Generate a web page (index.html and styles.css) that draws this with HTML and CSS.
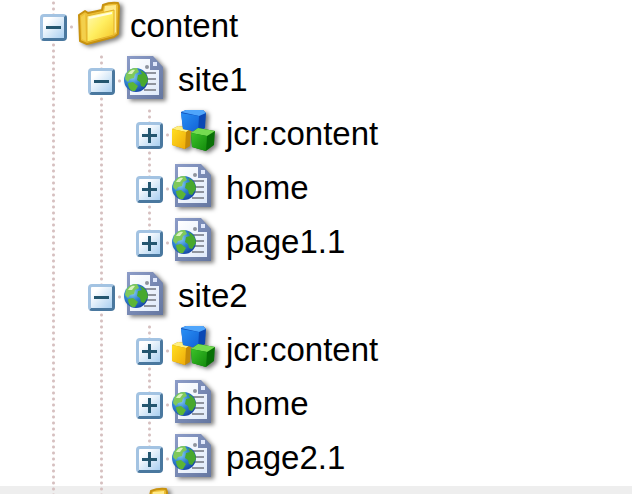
FILE: index.html
```html
<!DOCTYPE html>
<html lang="en">
<head>
  <meta charset="UTF-8">
  <title>Content tree</title>
  <link rel="stylesheet" href="styles.css">
</head>
<body>

  <!-- Icons used by the tree rows -->
  <svg class="sprite" aria-hidden="true">
    <defs>
      <linearGradient id="gold" x1="0" y1="0" x2="1" y2="1">
        <stop offset="0" stop-color="#fffbb8"/>
        <stop offset="0.5" stop-color="#ffee60"/>
        <stop offset="1" stop-color="#f5c426"/>
      </linearGradient>
      <linearGradient id="paper" x1="0" y1="0" x2="1" y2="1">
        <stop offset="0" stop-color="#ffffff"/>
        <stop offset="1" stop-color="#dfeafa"/>
      </linearGradient>
      <linearGradient id="frame" x1="0" y1="0" x2="1" y2="1">
        <stop offset="0" stop-color="#8c9cc8"/>
        <stop offset="1" stop-color="#6577a0"/>
      </linearGradient>
      <radialGradient id="sea" cx="0.35" cy="0.35" r="0.7">
        <stop offset="0" stop-color="#8fd0f5"/>
        <stop offset="0.5" stop-color="#2f83cf"/>
        <stop offset="1" stop-color="#1747a4"/>
      </radialGradient>
      <linearGradient id="blue" x1="0" y1="0" x2="1" y2="1">
        <stop offset="0" stop-color="#2990f5"/>
        <stop offset="1" stop-color="#1262d6"/>
      </linearGradient>
      <linearGradient id="yellow" x1="0" y1="0" x2="1" y2="1">
        <stop offset="0" stop-color="#ffdf22"/>
        <stop offset="1" stop-color="#efaa08"/>
      </linearGradient>
      <linearGradient id="green" x1="0" y1="0" x2="1" y2="1">
        <stop offset="0" stop-color="#3cc22a"/>
        <stop offset="1" stop-color="#128a0b"/>
      </linearGradient>
    </defs>

    <symbol id="folder" viewBox="0 0 48 48">
      <path d="M3 15 L9 11 L12 13 L26 10 L27 5 Q34 2 42 3 L43 6 L42 34 L38 37 L11 44 L4 41 Z" fill="#edbf35" stroke="#c8920f" stroke-width="2" stroke-linejoin="round"/>
      <path d="M29 6 L40 5 L40 32 L38 34 L38 10 L28 12 Z" fill="#ffea8a"/>
      <path d="M5 17 L9 14 L10 41 L6 39 Z" fill="#f3d04c"/>
      <path d="M11 16 L38 10 L38 35 L11 42 Z" fill="url(#gold)" stroke="#e2b02a" stroke-width="1"/>
      <path d="M13 18 L36 13" stroke="#fffde0" stroke-width="2"/>
    </symbol>

    <symbol id="page" viewBox="0 0 48 48">
      <path d="M3 2 H29 L39 13 V45 H3 Z" fill="url(#frame)"/>
      <path d="M6 5 H26 V16 H35 V41 H6 Z" fill="url(#paper)"/>
      <path d="M29 8 h4 v4 h-4 Z" fill="#dfe7fb"/>
      <path d="M20 19 H32 M20 25 H32 M20 30 H32 M20 36 H32" stroke="#8f949e" stroke-width="2"/>
      <circle cx="23" cy="13" r="2" fill="#8f949e"/>
      <circle cx="12" cy="26" r="12" fill="url(#sea)"/>
      <path d="M2 20 Q6 13 13 14 L15 18 L11 20 L10 24 L6 25 L4 28 L1 25 Z" fill="#7fc95a"/>
      <path d="M16 16 Q24 19 24 27 L20 33 L17 32 L16 28 L13 26 L14 21 L18 20 Z" fill="#48a82e"/>
      <path d="M4 29 L9 28 L14 32 L11 37 L8 37 Q4 34 4 29 Z" fill="#5cb535"/>
      <path d="M4 20 Q7 15 11 16 L8 20 Z" fill="#d9f2bf"/>
    </symbol>

    <symbol id="cubes" viewBox="0 0 48 48">
      <path d="M0 21 L6 18 L19 20 L18 38 L13 41 L0 37 Z" fill="#c58b08"/>
      <path d="M0 21 L6 18 L19 20 L14 24 Z" fill="#fff080"/>
      <path d="M0 21 L14 24 L13 41 L0 37 Z" fill="url(#yellow)"/>
      <path d="M9 4 L14 2 H31 L34 5 L33 20 L27 24 L11 21 Z" fill="#0b48b4"/>
      <path d="M9 4 L14 2 H31 L34 5 L27 8 Z" fill="#4fa5fb"/>
      <path d="M9 5 L27 8 L26 24 L11 21 Z" fill="url(#blue)"/>
      <path d="M19 25 L26 20 L43 23 L42 37 L34 43 L20 39 Z" fill="#087006"/>
      <path d="M19 25 L26 20 L43 23 L35 28 Z" fill="#74dc50"/>
      <path d="M19 25 L35 28 L34 43 L20 39 Z" fill="url(#green)"/>
    </symbol>
  </svg>

  <ul class="tree">
    <li class="row">
      <span class="guide node"><button class="toggle minus" aria-label="Collapse content"></button></span>
      <svg class="icon"><use href="#folder"/></svg>
      <span class="label">content</span>
    </li>

    <!-- site1 -->
    <li class="row">
      <span class="guide"></span>
      <span class="guide node"><button class="toggle minus" aria-label="Collapse site1"></button></span>
      <svg class="icon"><use href="#page"/></svg>
      <span class="label">site1</span>
    </li>
    <li class="row">
      <span class="guide"></span>
      <span class="guide"></span>
      <span class="guide node"><button class="toggle plus" aria-label="Expand jcr:content"></button></span>
      <svg class="icon"><use href="#cubes"/></svg>
      <span class="label">jcr:content</span>
    </li>
    <li class="row">
      <span class="guide"></span>
      <span class="guide"></span>
      <span class="guide node"><button class="toggle plus" aria-label="Expand home"></button></span>
      <svg class="icon"><use href="#page"/></svg>
      <span class="label">home</span>
    </li>
    <li class="row">
      <span class="guide"></span>
      <span class="guide"></span>
      <span class="guide node last"><button class="toggle plus" aria-label="Expand page1.1"></button></span>
      <svg class="icon"><use href="#page"/></svg>
      <span class="label">page1.1</span>
    </li>

    <!-- site2 -->
    <li class="row">
      <span class="guide"></span>
      <span class="guide node"><button class="toggle minus" aria-label="Collapse site2"></button></span>
      <svg class="icon"><use href="#page"/></svg>
      <span class="label">site2</span>
    </li>
    <li class="row">
      <span class="guide"></span>
      <span class="guide"></span>
      <span class="guide node"><button class="toggle plus" aria-label="Expand jcr:content"></button></span>
      <svg class="icon"><use href="#cubes"/></svg>
      <span class="label">jcr:content</span>
    </li>
    <li class="row">
      <span class="guide"></span>
      <span class="guide"></span>
      <span class="guide node"><button class="toggle plus" aria-label="Expand home"></button></span>
      <svg class="icon"><use href="#page"/></svg>
      <span class="label">home</span>
    </li>
    <li class="row">
      <span class="guide"></span>
      <span class="guide"></span>
      <span class="guide node last"><button class="toggle plus" aria-label="Expand page2.1"></button></span>
      <svg class="icon"><use href="#page"/></svg>
      <span class="label">page2.1</span>
    </li>

    <li class="row selected">
      <span class="guide"></span>
      <span class="guide"></span>
      <svg class="icon"><use href="#folder"/></svg>
    </li>
  </ul>

</body>
</html>
```

FILE: styles.css
```css
* {
  box-sizing: border-box;
}

body {
  margin: 0;
  background: #fff;
  color: #000;
  font-family: "Liberation Sans", Arial, sans-serif;
  font-size: 33px;
}

.sprite {
  display: block;
  width: 0;
  height: 0;
}

.tree {
  margin: 0;
  padding: 0;
  height: 100vh;
  overflow: hidden;
  list-style: none;
}

.row {
  display: flex;
  height: 54px;
  padding-left: 28px;
}

.selected {
  background: #eeeeee;
}

/* dotted connector lines */
.guide {
  display: flex;
  flex: none;
  width: 48px;
  padding: 14px 0 0 12px;
  background-image: radial-gradient(circle, #d6c0c0 1px, transparent 2px);
  background-size: 5px 6px;
  background-position: 23px 0;
  background-repeat: repeat-y;
}

.node {
  background-image:
    radial-gradient(circle, #d6c0c0 1px, transparent 2px),
    radial-gradient(circle, #d6c0c0 1px, transparent 2px);
  background-size: 5px 6px, 5px 6px;
  background-position: 41px 24px, 23px 0;
  background-repeat: no-repeat, repeat-y;
}

/* the line stops at the toggle of the last child */
.last {
  background-image:
    radial-gradient(circle, #d6c0c0 1px, transparent 2px),
    linear-gradient(#fff, #fff),
    radial-gradient(circle, #d6c0c0 1px, transparent 2px);
  background-size: 5px 6px, 100% 27px, 5px 6px;
  background-position: 41px 24px, 0 27px, 23px 0;
  background-repeat: no-repeat, no-repeat, repeat-y;
}

.toggle {
  width: 27px;
  height: 27px;
  padding: 0;
  border: 3px solid;
  border-color: #a3c3e2 #4a789f #4a789f #a3c3e2;
  border-radius: 4px;
  background-color: #d3e6f8;
  background-repeat: no-repeat;
  background-position: center;
  cursor: pointer;
}

.minus {
  background-image:
    linear-gradient(#24566f, #24566f),
    linear-gradient(135deg, #ffffff 20%, #a9cff0);
  background-size: 15px 3px, 100% 100%;
}

.plus {
  background-image:
    linear-gradient(#24566f, #24566f),
    linear-gradient(#24566f, #24566f),
    linear-gradient(135deg, #ffffff 20%, #a9cff0);
  background-size: 15px 3px, 3px 15px, 100% 100%;
}

.icon {
  flex: none;
  width: 48px;
  height: 48px;
  filter: drop-shadow(3px 2px 2px rgba(0, 0, 0, 0.5));
}

.label {
  padding-left: 6px;
  line-height: 52px;
}
```
